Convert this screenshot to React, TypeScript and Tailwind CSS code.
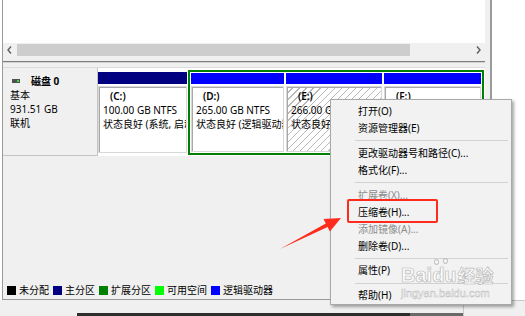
import React from "react";

type PartProps = {
  head: string;
  box: string;
  label: string;
  size: string;
  status: string;
  hatched?: boolean;
};

function Partition({ head, box, label, size, status, hatched }: PartProps) {
  return (
    <div className={`flex shrink-0 flex-col ${box}`}>
      <div className={`shrink-0 ${head}`} />
      <div
        className={`mt-[2px] flex-1 overflow-hidden whitespace-nowrap border border-[#d8d8d8] pl-[4px] pt-[2px] leading-[14px] shadow-[inset_1px_1px_0_#a8a8a8] ${
          hatched
            ? "bg-[repeating-linear-gradient(135deg,#ffffff_0px,#ffffff_4px,#b8b8b8_4px,#b8b8b8_5px)]"
            : "bg-white"
        }`}
      >
        <div className="pl-[7px] font-semibold">{label}</div>
        <div>{size}</div>
        <div>{status}</div>
      </div>
    </div>
  );
}

function Legend({ color, text }: { color: string; text: string }) {
  return (
    <div className="flex items-center">
      <span className={`mr-[3px] h-[9px] w-[9px] ${color}`} />
      <span>{text}</span>
    </div>
  );
}

type Item = { t: string; off?: boolean } | "sep";

const MENU: Item[] = [
  { t: "打开(O)" },
  { t: "资源管理器(E)" },
  "sep",
  { t: "更改驱动器号和路径(C)..." },
  { t: "格式化(F)..." },
  "sep",
  { t: "扩展卷(X)...", off: true },
  { t: "压缩卷(H)..." },
  { t: "添加镜像(A)...", off: true },
  { t: "删除卷(D)..." },
  "sep",
  { t: "属性(P)" },
  "sep",
  { t: "帮助(H)" },
];

function ContextMenu() {
  return (
    <div className="absolute left-[330px] top-[99px] flex h-[206px] w-[182px] flex-col border border-[#a8a8a8] bg-[#f2f2f2] pt-[3px] shadow-[2px_2px_3px_rgba(0,0,0,0.35)]">
      {MENU.map((it, i) =>
        it === "sep" ? (
          <div key={i} className="flex h-[8px] items-center pl-[24px] pr-[3px]">
            <div className="h-px w-full bg-[#d2d2d2]" />
          </div>
        ) : (
          <div
            key={i}
            className={`h-[17px] pl-[27px] leading-[17px] ${it.off ? "text-[#8c8c8c]" : "text-black"}`}
          >
            {it.t}
          </div>
        )
      )}
    </div>
  );
}

function Chevron({ left }: { left?: boolean }) {
  return (
    <svg width="5" height="8" viewBox="0 0 5 8" className="shrink-0">
      <path
        d={left ? "M4 0.5 L1 4 L4 7.5" : "M1 0.5 L4 4 L1 7.5"}
        fill="none"
        stroke="#606060"
        strokeWidth="1.4"
      />
    </svg>
  );
}

export default function App() {
  return (
    <div className="relative flex h-[316px] w-[525px] flex-col overflow-hidden bg-white font-['Noto_Sans','Noto_Sans_CJK_SC',sans-serif] text-[10px] text-black">
      {/* window */}
      <div className="ml-[2px] flex h-[300px] w-[490px] border-b border-l border-r-2 border-[#9a9a9a]">
        <div className="flex w-[482px] flex-col">
          {/* top pane */}
          <div className="h-[43px] bg-white" />
          <div className="flex h-[14px] items-center bg-[#f0f0f0] px-[4px]">
            <Chevron left />
            <div className="ml-[5px] h-[12px] w-[393px] bg-[#cdcdcd]" />
            <div className="flex-1" />
            <Chevron />
          </div>
          <div className="h-[4px] bg-[#f0f0f0]" />
          <div className="h-px bg-[#7c7c7c]" />
          <div className="h-px bg-[#d4d4d4]" />

          {/* bottom pane */}
          <div className="flex flex-1 flex-col bg-[#f0f0f0] pt-[4px]">
            <div className="flex h-[89px] border-t border-[#dcdcdc]">
              <div className="w-[95px] shrink-0 border-b border-r border-[#c4c4c4] pl-[7px] pt-[6px] leading-[14px]">
                <div className="flex items-center">
                  <span className="ml-[2px] mr-[11px] flex h-[4px] w-[8px] items-center justify-end bg-[#505050] pr-px">
                    <span className="h-[2px] w-[2px] bg-[#3ddc3d]" />
                  </span>
                  <span className="font-bold">磁盘 0</span>
                </div>
                <div>基本</div>
                <div>931.51 GB</div>
                <div>联机</div>
              </div>

              <div className="flex flex-1 items-start gap-px bg-white">
                <Partition
                  box="mt-[4px] h-[81px] w-[89px]"
                  head="h-[12px] bg-[#000080]"
                  label="(C:)"
                  size="100.00 GB NTFS"
                  status="状态良好 (系统, 启动, 页面文件)"
                />
                <div className="mt-[2px] flex h-[85px] w-[296px] shrink-0 gap-[2px] border-2 border-[#008000] p-px">
                  <Partition
                    box="h-full w-[93px]"
                    head="h-[11px] bg-[#0000ff]"
                    label="(D:)"
                    size="265.00 GB NTFS"
                    status="状态良好 (逻辑驱动器)"
                  />
                  <Partition
                    box="h-full w-[96px]"
                    head="h-[11px] bg-[#0000ff]"
                    label="(E:)"
                    size="266.00 GB NTFS"
                    status="状态良好 (逻辑驱动器)"
                    hatched
                  />
                  <Partition
                    box="h-full w-[97px]"
                    head="h-[11px] bg-[#0000ff]"
                    label="(F:)"
                    size="300.51 GB NTFS"
                    status="状态良好 (逻辑驱动器)"
                  />
                </div>
              </div>
            </div>

            <div className="flex-1" />

            <div className="mb-[3px] flex h-[12px] items-center gap-[4px] pl-[4px] leading-[12px]">
              <Legend color="bg-black" text="未分配" />
              <Legend color="bg-[#000080]" text="主分区" />
              <Legend color="bg-[#008000]" text="扩展分区" />
              <Legend color="bg-[#00ff00]" text="可用空间" />
              <Legend color="bg-[#0000ff]" text="逻辑驱动器" />
            </div>
          </div>
        </div>
        <div className="w-[5px] bg-[#f0f0f0]" />
      </div>

      {/* strip under the window */}
      <div className="flex flex-1 bg-[#f0f0f0]">
        <div className="flex w-[463px] flex-col justify-end">
          <div className="ml-[77px] flex h-[3px]">
            <div className="w-[333px] bg-[#2e2e2e]" />
            <div className="flex-1 bg-[#6a6a6a]" />
          </div>
        </div>
        <div className="flex-1 border-l border-t border-[#c8c8c8]" />
      </div>

      <ContextMenu />

      {/* highlight box */}
      <div className="absolute left-[347px] top-[199px] h-[24px] w-[91px] rounded-[2px] border-2 border-[#ff2b1c]" />

      {/* arrow */}
      <svg className="pointer-events-none absolute left-0 top-0" width="525" height="316">
        <polygon
          points="280,249 325.8,223.4 323.5,219 341,218 329.9,231.4 327.6,227"
          fill="#ff2b1c"
        />
      </svg>

      {/* watermark */}
      <div className="pointer-events-none absolute left-[401px] top-[264px] flex flex-col items-start font-['Liberation_Sans',sans-serif] text-white opacity-90">
        <div className="flex items-end text-[20px] font-bold leading-[22px] [-webkit-text-stroke:0.7px_#b4b4b4]">
          <span>Bai</span>
          <span className="relative">
            <span className="absolute -top-[5px] left-[2px] h-[6px] w-[5px] rounded-full border border-[#b4b4b4]" />
            <span className="absolute -top-[6px] left-[11px] h-[6px] w-[5px] rounded-full border border-[#b4b4b4]" />
            du
          </span>
          <span className="ml-[1px] font-['Noto_Sans_CJK_SC',sans-serif] text-[18px]">经验</span>
        </div>
        <div className="mt-[1px] text-[11px] leading-[12px] [-webkit-text-stroke:0.5px_#bcbcbc]">
          jingyan.baidu.com
        </div>
      </div>
    </div>
  );
}
